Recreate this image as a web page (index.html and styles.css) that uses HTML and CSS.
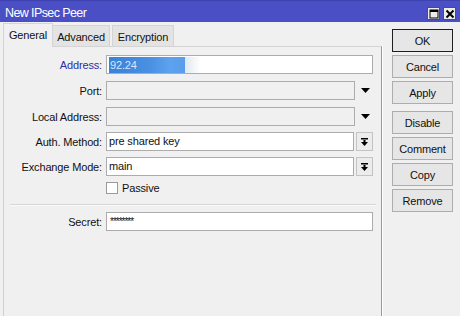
FILE: index.html
```html
<!DOCTYPE html>
<html>
<head>
<meta charset="utf-8">
<link rel="stylesheet" href="styles.css">
</head>
<body>
<div class="window">
  <div class="titlebar">
    <span class="title">New IPsec Peer</span>
    <div class="wbtns">
      <span class="wbtn"><svg width="10" height="10" viewBox="0 0 10 10"><rect x="1" y="1" width="8" height="8" fill="none" stroke="#000" stroke-width="1"/><rect x="1" y="1" width="8" height="2" fill="#000"/></svg></span>
      <span class="wbtn"><svg width="10" height="10" viewBox="0 0 10 10"><path d="M1.5 1.5 L8.5 8.5 M8.5 1.5 L1.5 8.5" stroke="#000" stroke-width="2"/></svg></span>
    </div>
  </div>
  <div class="body">
    <div class="main">
      <div class="tabs">
        <div class="tab active">General</div>
        <div class="tab adv">Advanced</div>
        <div class="tab enc">Encryption</div>
      </div>
      <div class="panel">
        <div class="row">
          <label class="label blue">Address:</label>
          <div class="input full"><span class="sel">92.24</span><span class="blur"></span></div>
        </div>
        <div class="row">
          <label class="label">Port:</label>
          <div class="input dis"></div>
          <span class="arrow"><svg width="9" height="5" viewBox="0 0 9 5"><path d="M0 0 H9 L4.5 5 Z" fill="#000"/></svg></span>
        </div>
        <div class="row tight">
          <label class="label">Local Address:</label>
          <div class="input dis"></div>
          <span class="arrow"><svg width="9" height="5" viewBox="0 0 9 5"><path d="M0 0 H9 L4.5 5 Z" fill="#000"/></svg></span>
        </div>
        <div class="row tight">
          <label class="label">Auth. Method:</label>
          <div class="input short">pre shared key</div>
          <span class="dbtn"><svg width="7" height="8" viewBox="0 0 7 8"><rect x="0" y="0" width="7" height="1.5" fill="#000"/><rect x="2.5" y="2" width="2" height="2" fill="#000"/><path d="M0 4 H7 L3.5 8 Z" fill="#000"/></svg></span>
        </div>
        <div class="row last">
          <label class="label">Exchange Mode:</label>
          <div class="input short">main</div>
          <span class="dbtn"><svg width="7" height="8" viewBox="0 0 7 8"><rect x="0" y="0" width="7" height="1.5" fill="#000"/><rect x="2.5" y="2" width="2" height="2" fill="#000"/><path d="M0 4 H7 L3.5 8 Z" fill="#000"/></svg></span>
        </div>
        <div class="check-row">
          <span class="checkbox"></span>
          <span class="check-label">Passive</span>
        </div>
        <div class="sep"></div>
        <div class="row">
          <label class="label">Secret:</label>
          <div class="input full secret">********</div>
        </div>
      </div>
    </div>
    <div class="side">
      <button class="btn ok">OK</button>
      <button class="btn">Cancel</button>
      <button class="btn">Apply</button>
      <button class="btn group">Disable</button>
      <button class="btn">Comment</button>
      <button class="btn">Copy</button>
      <button class="btn">Remove</button>
    </div>
  </div>
</div>
</body>
</html>
```
FILE: styles.css
```css
html, body {
  margin: 0;
  padding: 0;
  background: #f0f0f0;
}
body {
  font-family: "Liberation Sans", Arial, sans-serif;
  font-size: 11px;
  letter-spacing: -0.15px;
  color: #111;
}
.window {
  width: 460px;
  height: 316px;
  display: flex;
  flex-direction: column;
  overflow: hidden;
}
.titlebar {
  flex: none;
  height: 22px;
  box-sizing: border-box;
  background: #4b4fc6;
  border-top: 1px solid #3e41b0;
  display: flex;
  justify-content: space-between;
  align-items: flex-start;
  padding: 0 4px 0 5px;
}
.title {
  color: #fff;
  font-size: 12.5px;
  letter-spacing: -0.6px;
  line-height: 14px;
  margin-top: 5px;
}
.wbtns {
  display: flex;
  gap: 3px;
  margin-top: 6px;
}
.wbtn {
  width: 13px;
  height: 13px;
  box-sizing: border-box;
  background: #ececec;
  border: 1px solid #505050;
  display: flex;
  align-items: center;
  justify-content: center;
}
.wbtn svg { display: block; }
.body {
  flex: 1;
  display: flex;
  min-height: 0;
}
.main {
  width: 379px;
  margin-left: 3px;
  display: flex;
  flex-direction: column;
}
.tabs {
  height: 24px;
  display: flex;
  align-items: flex-end;
}
.tab {
  height: 21px;
  box-sizing: border-box;
  background: #e3e3e3;
  border: 1px solid #d4d4d4;
  border-bottom: none;
  display: flex;
  align-items: center;
  justify-content: center;
  padding-top: 1px;
}
.tab.active {
  width: 50px;
  height: 24px;
  margin-bottom: -1px;
  background: #f0f0f0;
  position: relative;
  z-index: 1;
  padding-top: 0;
  padding-bottom: 1px;
}
.tab.adv { width: 58px; margin-left: -1px; }
.tab.enc { width: 62px; margin-left: 2px; }
.panel {
  flex: 1;
  border-top: 1px solid #d4d4d4;
  border-left: 1px solid #cfcfcf;
  border-right: 1px solid #9a9a9a;
  box-shadow: 1px 0 0 #ffffff;
  padding-top: 8px;
}
.row {
  display: flex;
  align-items: center;
  height: 19px;
  margin-bottom: 7px;
}
.row.tight { margin-bottom: 6px; }
.row.last { margin-bottom: 5px; }
.label {
  width: 98px;
  text-align: right;
  margin-right: 4px;
  flex: none;
}
.label.blue { color: #2e2ea6; }
.input {
  height: 19px;
  box-sizing: border-box;
  border: 1px solid #acacac;
  background: #fff;
  line-height: 17px;
  padding-left: 2px;
  display: flex;
  align-items: center;
  overflow: hidden;
  white-space: nowrap;
}
.input.full { width: 267px; }
.input.dis { width: 249px; background: #f0f0f0; }
.input.short { width: 248px; }
.sel {
  width: 76px;
  height: 16px;
  box-sizing: border-box;
  padding-left: 1px;
  line-height: 16px;
  color: #d8e6ff;
  background: linear-gradient(90deg, #3a82d6 0%, #4a91e3 55%, #5ea2ee 80%, #5a9cea 100%);
}
.blur {
  width: 16px;
  height: 16px;
  background: linear-gradient(90deg, #dfe8f3 0%, #f4f6f9 60%, #ffffff 100%);
}
.arrow {
  width: 18px;
  display: flex;
  justify-content: center;
  padding-left: 1px;
}
.arrow svg { display: block; }
.dbtn {
  width: 17px;
  height: 19px;
  box-sizing: border-box;
  margin-left: 2px;
  border: 1px solid #c3c3c3;
  background: #ececec;
  display: flex;
  align-items: center;
  justify-content: center;
}
.dbtn svg { display: block; }
.check-row {
  display: flex;
  align-items: center;
  height: 13px;
  padding-left: 102px;
}
.checkbox {
  width: 12px;
  height: 12px;
  box-sizing: border-box;
  border: 1px solid #9a9a9a;
  background: #fff;
  margin-right: 4px;
}
.sep {
  margin: 10px 5px 6px 6px;
  border-top: 1px solid #d6d6d6;
  border-bottom: 1px solid #fafafa;
}
.secret {
  letter-spacing: -1px;
  font-size: 10px;
  padding-left: 3px;
}
.side {
  display: flex;
  flex-direction: column;
  gap: 3px;
  padding: 7px 0 0 10px;
}
.btn {
  width: 61px;
  height: 23px;
  margin: 0;
  padding: 0;
  box-sizing: border-box;
  font-family: "Liberation Sans", Arial, sans-serif;
  font-size: 11px;
  letter-spacing: -0.2px;
  color: #111;
  background: #e6e6e6;
  border: 1px solid #adadad;
  border-radius: 0;
}
.btn.ok { border-color: #1e1e1e; }
.btn.group { margin-top: 4px; }
```
